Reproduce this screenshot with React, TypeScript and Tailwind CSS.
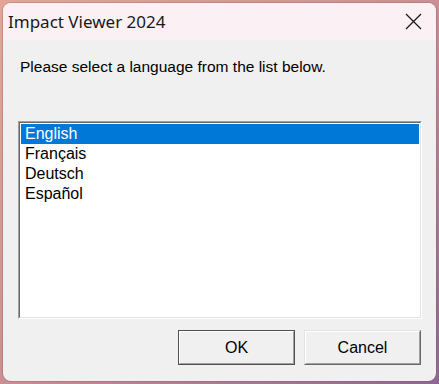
import { useState } from 'react'

const languages = ['English', 'Français', 'Deutsch', 'Español']

const App = () => {
    const [selected, setSelected] = useState(0)

    return (
        <div className="w-[439px] h-[384px] p-[3px] bg-gradient-to-br from-[#e4a596] via-[#c98f92] to-[#8f6690]">
            <div className="w-full h-full flex flex-col rounded-[8px] overflow-hidden bg-[#f0f0f0] shadow-[0_0_0_1px_rgba(120,80,90,0.25)]">
                {/* Title bar */}
                <div className="h-[37px] shrink-0 flex items-center justify-between bg-[#fbf0f4] pl-[5px] pr-[14px]">
                    <span className="text-[17px] text-[#1a1a1a] font-['Noto_Sans',sans-serif]">Impact Viewer 2024</span>
                    <svg width="17" height="17" viewBox="0 0 17 17" className="text-[#1a1a1a]">
                        <path d="M1 1L16 16M16 1L1 16" stroke="currentColor" strokeWidth="1.3" fill="none" />
                    </svg>
                </div>

                {/* Client area */}
                <div className="flex-1 flex flex-col font-['Liberation_Sans',Arial,sans-serif] text-black">
                    <p className="pt-[18px] pl-[17px] text-[15.5px] leading-[18px]">
                        Please select a language from the list below.
                    </p>

                    {/* Listbox */}
                    <div className="mt-[45px] ml-[15px] w-[404px] h-[198px] border-t border-l border-[#a0a0a0] border-b-white border-r-white border-b border-r">
                        <div className="w-full h-full border-t border-l border-[#696969] border-b border-r border-b-[#e3e3e3] border-r-[#e3e3e3] bg-white pt-[1px] px-[1px]">
                            {languages.map((lang, i) => (
                                <div
                                    key={lang}
                                    onClick={() => setSelected(i)}
                                    className={`h-[20px] pl-[4px] text-[16px] leading-[20px] ${selected === i ? 'bg-[#0078d7] text-white' : 'text-black'}`}
                                >
                                    {lang}
                                </div>
                            ))}
                        </div>
                    </div>

                    {/* Buttons */}
                    <div className="mt-[11px] ml-[175px] flex gap-[9px]">
                        <button className="w-[117px] h-[35px] border border-[#505050]">
                            <div className="w-full h-full border-t border-l border-white border-b border-r border-b-[#a0a0a0] border-r-[#a0a0a0] flex items-center justify-center text-[16px]">
                                OK
                            </div>
                        </button>
                        <button className="w-[117px] h-[35px] border-t border-l border-[#e3e3e3] border-b border-r border-b-[#696969] border-r-[#696969]">
                            <div className="w-full h-full border-t border-l border-white border-b border-r border-b-[#a0a0a0] border-r-[#a0a0a0] flex items-center justify-center text-[16px]">
                                Cancel
                            </div>
                        </button>
                    </div>
                </div>
            </div>
        </div>
    )
}

export default App
